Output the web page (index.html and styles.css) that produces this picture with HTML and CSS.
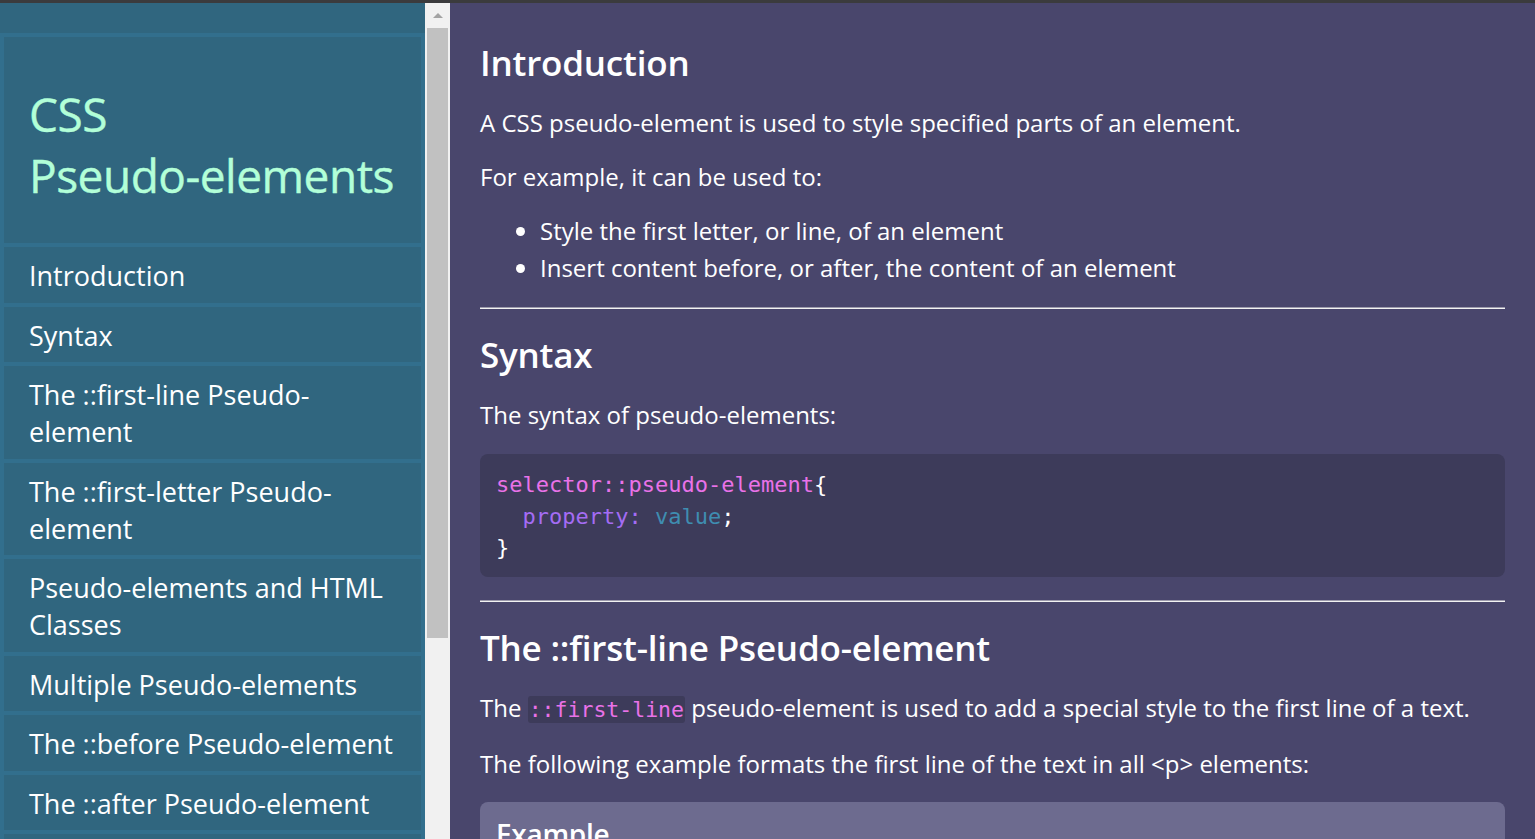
FILE: index.html
```html
<!DOCTYPE html>
<html lang="en">
<head>
<meta charset="utf-8">
<title>CSS Pseudo-elements</title>
<link rel="stylesheet" href="styles.css">
</head>
<body>
<div class="topbar"></div>
<div class="layout">
  <aside class="sidebar">
    <nav class="nav">
      <div class="nav-title"><h1>CSS <span class="nowrap">Pseudo-elements</span></h1></div>
      <a class="nav-item" href="#intro">Introduction</a>
      <a class="nav-item" href="#syntax">Syntax</a>
      <a class="nav-item" href="#first-line">The ::first-line Pseudo-element</a>
      <a class="nav-item" href="#first-letter">The ::first-letter Pseudo-element</a>
      <a class="nav-item" href="#classes">Pseudo-elements and HTML Classes</a>
      <a class="nav-item" href="#multiple">Multiple Pseudo-elements</a>
      <a class="nav-item" href="#before">The ::before Pseudo-element</a>
      <a class="nav-item" href="#after">The ::after Pseudo-element</a>
      <a class="nav-item" href="#marker">The ::marker Pseudo-element</a>
    </nav>
  </aside>
  <div class="scrollbar">
    <div class="scroll-btn"><span class="arrow-up"></span></div>
    <div class="scroll-thumb"></div>
  </div>
  <main class="main">
    <section id="intro">
      <h2>Introduction</h2>
      <p>A CSS pseudo-element is used to style specified parts of an element.</p>
      <p>For example, it can be used to:</p>
      <ul>
        <li>Style the first letter, or line, of an element</li>
        <li>Insert content before, or after, the content of an element</li>
      </ul>
    </section>
    <hr>
    <section id="syntax">
      <h2>Syntax</h2>
      <p>The syntax of pseudo-elements:</p>
      <pre class="code"><span class="c-sel">selector::pseudo-element</span>{
  <span class="c-prop">property:</span> <span class="c-val">value</span>;
}</pre>
    </section>
    <hr>
    <section id="first-line">
      <h2>The ::first-line Pseudo-element</h2>
      <p>The <code class="inline">::first-line</code> pseudo-element is used to add a special style to the first line of a text.</p>
      <p>The following example formats the first line of the text in all &lt;p&gt; elements:</p>
      <div class="example">
        <h3>Example</h3>
      </div>
    </section>
  </main>
</div>
</body>
</html>
```
FILE: styles.css
```css
* { box-sizing: border-box; }
html, body { margin: 0; height: 100%; }
body {
  font-family: "Open Sans", "Noto Sans", sans-serif;
  display: flex;
  flex-direction: column;
  overflow: hidden;
  background: #49466c;
}
.topbar { height: 3px; background: #3b3b3d; flex: none; }
.layout { flex: 1; display: flex; min-height: 0; }

.sidebar {
  width: 425px;
  flex: none;
  background: #30667f;
  padding-top: 30px;
  overflow: hidden;
}
.nav {
  background: #326f8d;
  display: flex;
  flex-direction: column;
  gap: 4px;
  padding: 4px;
}
.nav-title { background: #30667f; padding: 47px 25px 37px; }
.nav-title h1 {
  margin: 0;
  font-size: 46px;
  line-height: 61px;
  font-weight: 500;
  color: #b2ffd8;
  letter-spacing: -0.5px;
  -webkit-text-stroke: 0.4px #b2ffd8;
}
.nowrap { white-space: nowrap; }
.nav-item {
  display: block;
  background: #30667f;
  color: #ffffff;
  text-decoration: none;
  font-size: 27px;
  line-height: 37px;
  padding: 10px 25px 8.5px;
}

.scrollbar {
  width: 25px;
  flex: none;
  background: #f1f1f1;
}
.scroll-btn { height: 25px; display: flex; justify-content: center; padding-top: 10px; }
.arrow-up {
  width: 0; height: 0;
  border-left: 5px solid transparent;
  border-right: 5px solid transparent;
  border-bottom: 5px solid #a3a3a3;
}
.scroll-thumb { margin: 0 2px; height: 610px; background: #c1c1c1; }

.main {
  flex: 1;
  min-width: 0;
  background: #49466c;
  color: #ffffff;
  padding: 36px 30px 0;
  overflow: hidden;
  font-size: 24px;
}
h2 {
  margin: 0 0 17px;
  font-size: 35px;
  line-height: 48px;
  font-weight: 600;
  letter-spacing: -0.2px;
}
hr + section h2 { margin-top: 22px; }
p { margin: 17px 0; line-height: 37px; }
ul { margin: 17px 0; padding-left: 60px; line-height: 37px; }
hr {
  margin: 21px 0 0;
  border: 0;
  border-top: 1px solid #9d9bad;
  border-bottom: 1px solid #f2f2f2;
  height: 0;
}
.code {
  margin: 21px 0 23px;
  background: #3d3b5a;
  border-radius: 8px;
  padding: 15px 16px 13px;
  font-family: "DejaVu Sans Mono", "Liberation Mono", monospace;
  font-size: 22px;
  line-height: 31.5px;
  color: #ffffff;
}
.c-sel { color: #e972e8; }
.c-prop { color: #a46cf4; }
.c-val { color: #3f8db1; }
.inline {
  font-family: "DejaVu Sans Mono", "Liberation Mono", monospace;
  font-size: 21.5px;
  color: #e972e8;
  background: #3d3b5a;
  border-radius: 3px;
  padding: 1px 1px;
}
.example {
  margin-top: 20px;
  background: #6d6b8f;
  border-radius: 8px 8px 0 0;
  padding: 12px 16px;
  height: 80px;
}
.example h3 {
  margin: 0;
  font-size: 28px;
  line-height: 40px;
  font-weight: 600;
  letter-spacing: -0.3px;
}
```
